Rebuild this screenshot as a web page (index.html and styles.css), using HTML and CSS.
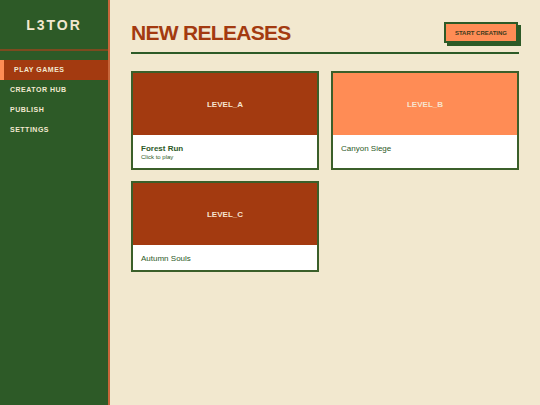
FILE: index.html
```html
<!DOCTYPE html>
<html lang="en">
<head>
    <meta charset="UTF-8">
    <meta name="viewport" content="width=device-width, initial-scale=1.0">
    <title>L3TOR</title>
    <link rel="stylesheet" href="styles.css">
</head>
<body>
    <aside class="sidebar">
        <div class="logo">L3TOR</div>
        <nav class="nav">
            <a class="nav-item active">PLAY GAMES</a>
            <a class="nav-item">CREATOR HUB</a>
            <a class="nav-item">PUBLISH</a>
            <a class="nav-item">SETTINGS</a>
        </nav>
    </aside>
    <main class="main">
        <div class="header">
            <h1>NEW RELEASES</h1>
            <button class="button">START CREATING</button>
        </div>
        <div class="grid">
            <div class="card">
                <div class="thumb rust">LEVEL_A</div>
                <div class="card-body">
                    <div class="card-title bold">Forest Run</div>
                    <div class="card-sub">Click to play</div>
                </div>
            </div>
            <div class="card">
                <div class="thumb orange">LEVEL_B</div>
                <div class="card-body">
                    <div class="card-title">Canyon Siege</div>
                </div>
            </div>
            <div class="card">
                <div class="thumb rust">LEVEL_C</div>
                <div class="card-body">
                    <div class="card-title">Autumn Souls</div>
                </div>
            </div>
        </div>
    </main>
</body>
</html>
```

FILE: styles.css
```css
body {
    font-family: "Liberation Sans", Arial, sans-serif;
    margin: 0;
    padding: 0;
    display: flex;
    height: 100vh;
    background: #f2e8cf;
    overflow: hidden;
}
.sidebar {
    width: 108px;
    flex-shrink: 0;
    background: #2d5a27;
    border-right: 2px solid #c8663a;
}
.logo {
    height: 49px;
    display: flex;
    align-items: center;
    justify-content: center;
    color: #f2e8cf;
    font-size: 14px;
    font-weight: bold;
    letter-spacing: 2px;
    border-bottom: 2px solid #7d4a1f;
}
.nav {
    margin-top: 9px;
    display: flex;
    flex-direction: column;
}
.nav-item {
    height: 20px;
    line-height: 20px;
    padding-left: 10px;
    color: #f2e8cf;
    font-size: 7px;
    font-weight: bold;
    letter-spacing: 0.5px;
}
.nav-item.active {
    background: #a33a10;
    border-left: 4px solid #ff8c55;
    padding-left: 10px;
}
.main {
    flex: 1;
    padding: 20px 21px 0 21px;
}
.header {
    display: flex;
    justify-content: space-between;
    align-items: center;
    padding-bottom: 7px;
    border-bottom: 2px solid #2d5a27;
    margin-bottom: 17px;
}
h1 {
    margin: 0;
    font-size: 21px;
    line-height: 25px;
    color: #a33a10;
    letter-spacing: -0.7px;
}
.button {
    font-family: "Liberation Sans", Arial, sans-serif;
    background: #ff8c55;
    color: #3b3a1c;
    border: 2px solid #2d5a27;
    box-shadow: 3px 3px 0 #2d5a27;
    font-size: 6px;
    font-weight: bold;
    height: 21px;
    padding: 0 9px;
    margin-right: 1px;
}
.grid {
    display: grid;
    grid-template-columns: 1fr 1fr;
    gap: 11px 12px;
}
.card {
    border: 2px solid #3b5f2a;
    background: #fff;
    display: flex;
    flex-direction: column;
}
.thumb {
    height: 62px;
    display: flex;
    align-items: center;
    justify-content: center;
    color: #f7e4cf;
    font-size: 8px;
    font-weight: bold;
}
.rust {
    background: #a33a10;
}
.orange {
    background: #ff8c55;
}
.card-body {
    padding: 9px 8px 7px;
    color: #2d5a27;
}
.card-title {
    font-size: 8px;
    line-height: 9px;
}
.card-title.bold {
    font-weight: bold;
}
.card-sub {
    font-size: 6px;
    line-height: 8px;
}
```
